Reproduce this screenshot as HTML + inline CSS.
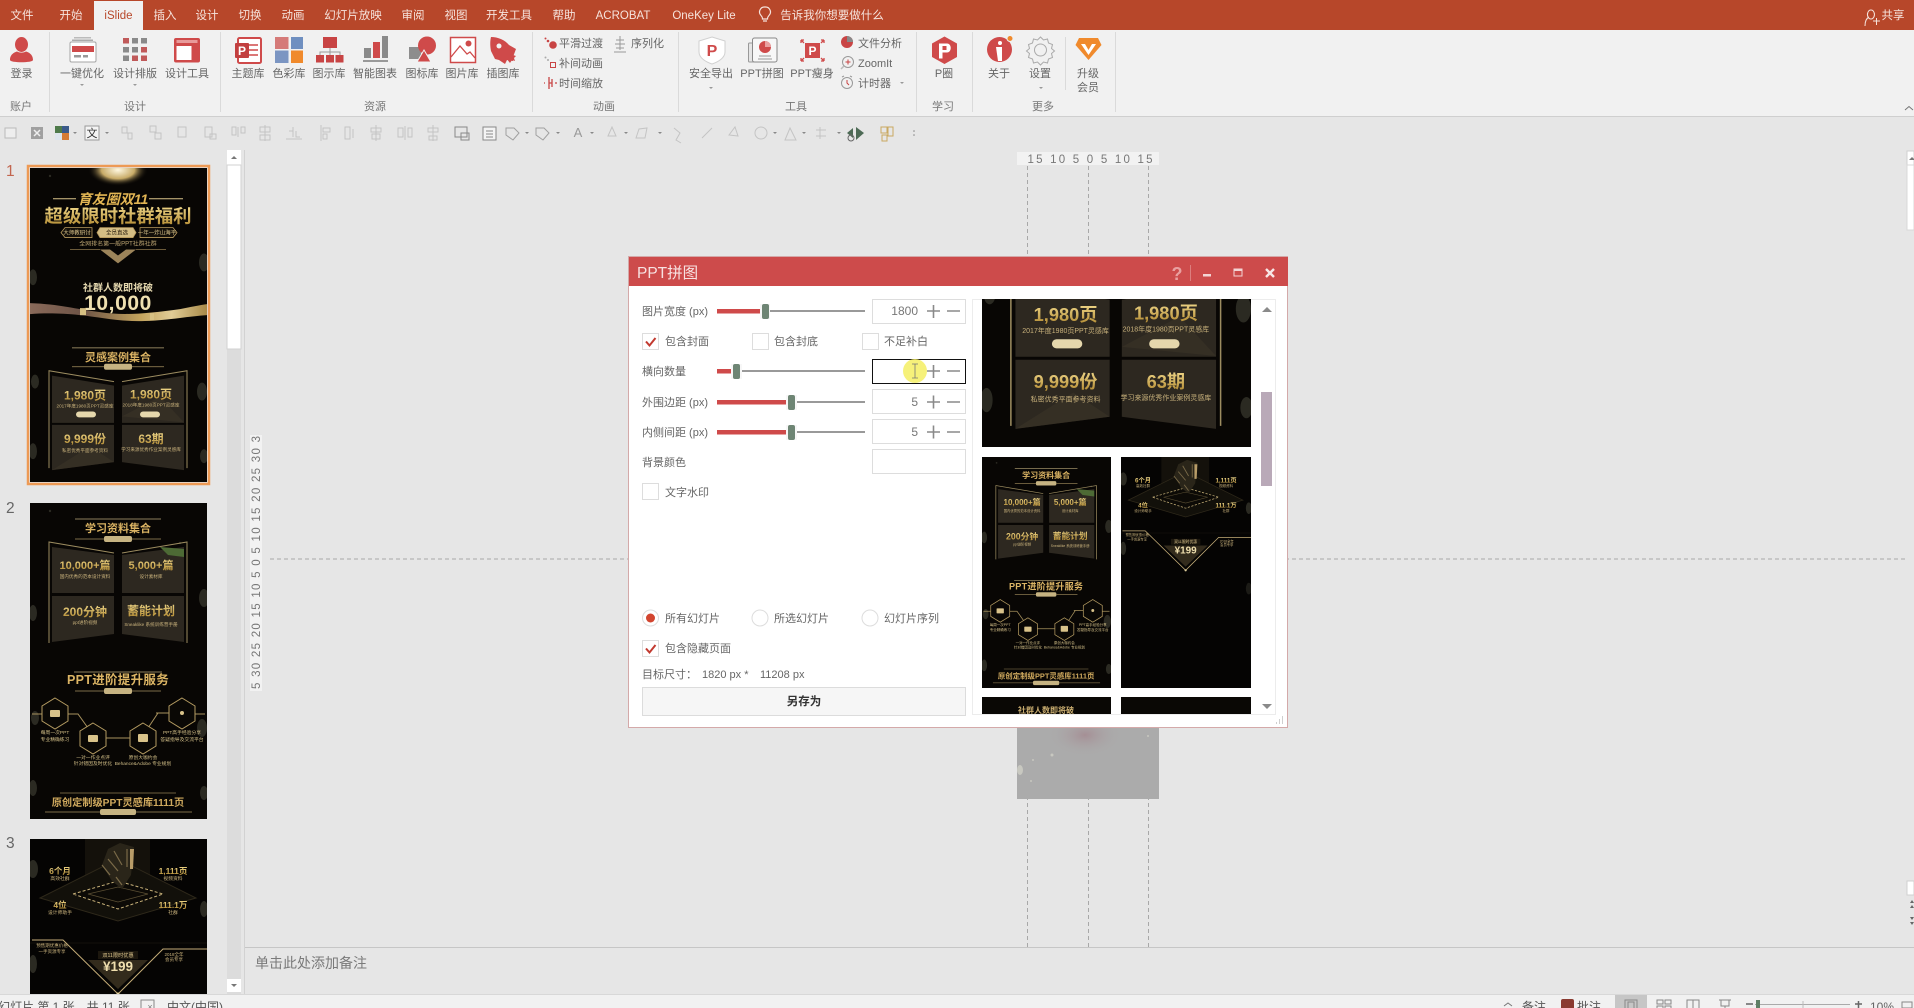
<!DOCTYPE html>
<html lang="zh-CN"><head><meta charset="utf-8"><title>PPT拼图</title>
<style>
html,body{margin:0;padding:0;width:1914px;height:1008px;overflow:hidden;background:#e6e6e6}
svg{display:block}
#root{filter:blur(.35px)}
text{font-family:"Liberation Sans","Noto Sans CJK SC",sans-serif}
.tab{font-size:11.5px;fill:#f6e3dc;text-anchor:middle}
.lb{font-size:11px;fill:#666;text-anchor:middle}
.ll{font-size:11px;fill:#666}
.g{font-size:11px;fill:#777;text-anchor:middle}
.d{font-size:11px;fill:#666}
.n{font-size:12px;fill:#777;text-anchor:end}
.c{text-anchor:middle;font-weight:bold}
.tb{fill:none;stroke:#c4c4c4;stroke-width:1}
.dd{fill:#999}
.gl{stroke:#a8a8a8;stroke-dasharray:4 3;stroke-width:1;fill:none}
.box{fill:#fff;stroke:#ddd}
.pm{stroke:#8a8a8a;stroke-width:1.6;fill:none}
</style></head><body>
<svg id="root" width="1914" height="1008" viewBox="0 0 1914 1008" xmlns="http://www.w3.org/2000/svg">
<defs>
<linearGradient id="gd" x1="0" y1="0" x2="0" y2="1"><stop offset="0" stop-color="#f0d88a"/><stop offset="1" stop-color="#b08830"/></linearGradient>
<linearGradient id="wv" x1="0" y1="0" x2="1" y2="0"><stop offset="0" stop-color="#8a6a5a"/><stop offset=".3" stop-color="#6d5346"/><stop offset=".62" stop-color="#c2a25c"/><stop offset=".8" stop-color="#e1cc96"/><stop offset="1" stop-color="#a88a48"/></linearGradient>
<radialGradient id="gl"><stop offset="0" stop-color="#fff8e0"/><stop offset=".55" stop-color="#c8ab68"/><stop offset="1" stop-color="#0a0805" stop-opacity="0"/></radialGradient>
<radialGradient id="rd"><stop offset="0" stop-color="#a58f95"/><stop offset="1" stop-color="#ababab" stop-opacity="0"/></radialGradient>

<symbol id="spots" viewBox="0 0 177 316">
<g fill="#2b2a22"><ellipse cx="3" cy="110" rx="4" ry="8"/><ellipse cx="174" cy="95" rx="5" ry="9"/><ellipse cx="5" cy="215" rx="4" ry="7"/><ellipse cx="172" cy="225" rx="5" ry="9"/><ellipse cx="3" cy="285" rx="4" ry="8"/><ellipse cx="174" cy="290" rx="4" ry="7"/><circle cx="20" cy="8" r="1.2"/><circle cx="150" cy="40" r="1.2"/></g>
</symbol>

<symbol id="s1" viewBox="0 0 177 316">
<rect width="177" height="316" fill="#080604"/>
<use href="#spots" width="177" height="316"/>
<ellipse cx="88" cy="2" rx="30" ry="16" fill="url(#gl)"/>
<path d="M23 31H46M119 31H153" stroke="#d8c28a" stroke-width="1"/>
<text x="83" y="36" class="c" font-size="14" font-style="italic" fill="#e3b654">育友圈双11</text>
<text x="88" y="55" class="c" font-size="18.4" fill="url(#gd)">超级限时社群福利</text>
<g fill="#14100a" stroke="#b89a5e" stroke-width=".8"><path d="M31 65l4-5H62V70H35z"/><path d="M70 60H103l3 5-3 5H70l-3-5z" fill="#d4bd84"/><path d="M110 60H143l4 5-4 5H110z"/></g>
<g text-anchor="middle" font-size="5.5" fill="#d8c28a"><text x="47" y="67">大师教研讨</text><text x="87" y="67" fill="#2b2010">全员直选</text><text x="127" y="67">一年一炸山海平</text></g>
<text x="88" y="78" text-anchor="middle" font-size="6" fill="#bfa774">全网排名第一般PPT社群社群</text>
<path d="M40 82H70M106 82H136" stroke="#6b5a3a"/>
<path d="M70 82L88 96L106 82L96 82L88 88L80 82Z" fill="#9c845a"/>
<text x="88" y="124" text-anchor="middle" font-size="10" fill="#e4d7ae" font-weight="bold">社群人数即将破</text>
<text x="88" y="143" class="c" font-size="21" letter-spacing=".6" fill="#efe0b0">10,000</text>
<path d="M0 136C30 137 45 142 70 145C95 149 120 146 150 142C160 140 170 138 177 137V148C160 149 140 153 115 154C90 155 70 150 50 148C30 146 15 146 0 147Z" fill="url(#wv)"/>
<path d="M50 141H56V148H50zM120 146H124V153H120z" fill="#d7c083"/>
<path d="M42 181H134" stroke="#b7a678" stroke-width=".8"/>
<text x="88" y="194" class="c" font-size="11" fill="#d9b263">灵感案例集合</text>
<path d="M42 200H74M102 200H134" stroke="#a38e5e" stroke-width=".8"/><rect x="74" y="197" width="28" height="6" rx="2" fill="#c6b382"/>
<path d="M19 302V204L84 215M157 302V204L92 215" fill="none" stroke="#9c8c60"/>
<path d="M22 209L84 219V256.500H22Z" fill="#2d2820"/><path d="M154 209L92 219V256.500H154Z" fill="#2d2820"/>
<path d="M22 258.500H84V296L22 304Z" fill="#2d2820"/><path d="M154 258.500H92V296L154 304Z" fill="#2d2820"/>
<path d="M22 304L60 280L84 296ZM92 250L130 230L154 256Z" fill="#3a3428" opacity=".6"/>
<g text-anchor="middle" font-weight="bold" fill="url(#gd)"><text x="55" y="233" font-size="12">1,980页</text><text x="121" y="232" font-size="12">1,980页</text><text x="55" y="277" font-size="12">9,999份</text><text x="121" y="277" font-size="12">63期</text></g>
<g text-anchor="middle" font-size="4.6" fill="#c9b27c"><text x="55" y="241">2017年度1980页PPT灵感库</text><text x="121" y="240">2018年度1980页PPT灵感库</text><text x="55" y="286">私密优秀平面参考资料</text><text x="121" y="285">学习来源优秀作业案例灵感库</text></g>
<rect x="46" y="245" width="20" height="6" rx="3" fill="#e5d7ac"/><rect x="110" y="245" width="20" height="6" rx="3" fill="#e5d7ac"/>
</symbol>

<symbol id="s2" viewBox="0 0 177 316">
<rect width="177" height="316" fill="#080604"/>
<use href="#spots" width="177" height="316"/>
<path d="M45 16H131" stroke="#b7a678" stroke-width=".8"/>
<text x="88" y="29" class="c" font-size="11" fill="#d9b263">学习资料集合</text>
<path d="M45 36H74M102 36H131" stroke="#a38e5e" stroke-width=".8"/><rect x="74" y="33" width="28" height="6" rx="2" fill="#c6b382"/>
<path d="M19 140V39L84 50M157 140V39L92 50" fill="none" stroke="#9c8c60"/>
<path d="M22 44L84 52V90H22Z" fill="#2d2820"/><path d="M154 44L92 52V90H154Z" fill="#2d2820"/><path d="M130 44L154 46V54L138 52Z" fill="#4d6a35"/>
<path d="M22 93H84V131L22 139Z" fill="#2d2820"/><path d="M154 93H92V131L154 139Z" fill="#2d2820"/>
<g text-anchor="middle" font-weight="bold" fill="url(#gd)"><text x="55" y="66" font-size="11">10,000+篇</text><text x="121" y="66" font-size="11">5,000+篇</text><text x="55" y="113" font-size="12">200分钟</text><text x="121" y="112" font-size="12">蓄能计划</text></g>
<g text-anchor="middle" font-size="4.6" fill="#c9b27c"><text x="55" y="75">国内优秀的范本设计资料</text><text x="121" y="75">设计素材库</text><text x="55" y="121">ppt进阶视频</text><text x="121" y="123">Sneaklike 系统训练营手册</text></g>
<path d="M44 169H132" stroke="#b7a678" stroke-width=".8"/>
<text x="88" y="181" class="c" font-size="12.5" letter-spacing=".3" fill="#dcb565">PPT进阶提升服务</text>
<path d="M45 188H74M102 188H131" stroke="#a38e5e" stroke-width=".8"/><rect x="74" y="185" width="28" height="6" rx="2" fill="#c6b382"/>
<path d="M2 211H13M37 211H48L58 225M126 210H136M165 211H175M118 225L128 210H139M74 235H102" fill="none" stroke="#a8925e"/>
<g fill="#0a0805" stroke="#b59c62" stroke-width="1"><path d="M25 195L38 203V218L25 226L12 218V203Z"/><path d="M63 220L76 228V243L63 251L50 243V228Z"/><path d="M113 220L126 228V243L113 251L100 243V228Z"/><path d="M152 195L165 203V218L152 226L139 218V203Z"/></g>
<g fill="#d9c38a"><rect x="20" y="207" width="10" height="7" rx="1"/><rect x="58" y="232" width="10" height="7" rx="1"/><rect x="108" y="231" width="10" height="8" rx="1"/><circle cx="152" cy="210" r="2"/></g>
<g text-anchor="middle" font-size="4.8" fill="#d3bf88"><text x="25" y="231">每周一次PPT</text><text x="25" y="238">专业精确练习</text><text x="63" y="256">一对一作业点评</text><text x="63" y="262">针对错因及时优化</text><text x="113" y="256">原创大咖约会</text><text x="113" y="262">Behance&amp;Adobe 专业规划</text><text x="152" y="231">PPT高手经验分享</text><text x="152" y="238">答疑指导及交流平台</text></g>
<path d="M30 290H146" stroke="#8f7c52" stroke-width=".7"/>
<text x="88" y="303" class="c" font-size="10.2" fill="#cfa95e">原创定制级PPT灵感库1111页</text>
<path d="M15 309H70M106 309H162" stroke="#a38e5e" stroke-width=".8"/><rect x="70" y="306" width="36" height="6" rx="2" fill="#c6b382"/>
</symbol>

<symbol id="s3" viewBox="0 0 177 316">
<rect width="177" height="316" fill="#050403"/>
<ellipse cx="3" cy="30" rx="5" ry="9" fill="#2b2a22"/><ellipse cx="174" cy="70" rx="4" ry="8" fill="#2b2a22"/><ellipse cx="3" cy="125" rx="4" ry="9" fill="#2b2a22"/><ellipse cx="174" cy="180" rx="4" ry="8" fill="#1c1b16"/>
<rect x="55" y="0" width="65" height="50" fill="#14110b"/>
<path d="M10 59L88 20L166 59L88 82Z" fill="#12100a" stroke="#2e281a"/>
<path d="M43 55L88 42L133 55L88 70Z" fill="#0c0a06" stroke="#c8b27a" stroke-dasharray="3 2" stroke-width="1"/>
<path d="M58 55L88 48L118 55L88 63Z" fill="none" stroke="#5c5034" stroke-width=".7"/>
<path d="M78 10L90 4L104 8L101 36L92 50L82 42L72 26Z" fill="#2a2519"/>
<path d="M78 20L88 32M84 12L92 26M97 10V28M72 26L80 36M86 38L92 46" stroke="#7a6a48" stroke-width="1.200" fill="none"/><path d="M100 10L104 10L103 30L100 30Z" fill="#b89c68"/>
<path d="M0 104H177" stroke="#14110b"/>
<path d="M2 101L33 101L88 155L133 110L177 110" fill="none" stroke="#c5ad78" stroke-width="1"/>
<path d="M58 121H118L88 150Z" fill="#332b1c"/>
<circle cx="88" cy="155" r="1.5" fill="#e2d19e"/>
<g text-anchor="middle" font-weight="bold" fill="url(#gd)" font-size="8.5"><text x="30" y="35">6个月</text><text x="143" y="35">1,111页</text><text x="30" y="69">4位</text><text x="143" y="69">111.1万</text></g>
<g text-anchor="middle" font-size="4.8" fill="#c9b27c"><text x="30" y="41">高效社群</text><text x="143" y="41">视频资料</text><text x="30" y="75">设计师助手</text><text x="143" y="75">社群</text></g>
<text x="22" y="108" text-anchor="middle" font-size="4.5" fill="#c9b27c">预售期优惠价格</text><text x="22" y="114" text-anchor="middle" font-size="4.5" fill="#c9b27c">一手资源专享</text><text x="144" y="117" text-anchor="middle" font-size="4.5" fill="#c9b27c">2018全年</text><text x="144" y="122" text-anchor="middle" font-size="4.5" fill="#c9b27c">会员专享</text>
<rect x="68" y="112" width="40" height="8" fill="#1c170e"/>
<text x="88" y="118" text-anchor="middle" font-size="5.2" fill="#e0c88e">双11限时优惠</text>
<text x="88" y="132" class="c" font-size="13.5" fill="#f0dfae">¥199</text>
</symbol>
</defs>

<!-- title / tabs -->
<rect width="1914" height="30" fill="#b7472a"/>
<rect x="94" y="1" width="49" height="29" fill="#f1f1f1"/>
<g class="tabs">
<text x="22" y="19" class="tab">文件</text><text x="71" y="19" class="tab">开始</text>
<text x="118.500" y="19" class="tab" style="fill:#b7472a">iSlide</text>
<text x="165" y="19" class="tab">插入</text><text x="207" y="19" class="tab">设计</text><text x="250" y="19" class="tab">切换</text><text x="293" y="19" class="tab">动画</text><text x="353" y="19" class="tab">幻灯片放映</text><text x="413" y="19" class="tab">审阅</text><text x="456" y="19" class="tab">视图</text><text x="509" y="19" class="tab">开发工具</text><text x="564" y="19" class="tab">帮助</text><text x="623" y="19" class="tab">ACROBAT</text><text x="704" y="19" class="tab">OneKey Lite</text><text x="832" y="19" class="tab">告诉我你想要做什么</text><text x="1893" y="19" class="tab">共享</text>
</g>
<path d="M765 7a5 5 0 0 1 4 8.500c-1 1-1.500 2-1.500 3.500h-5c0-1.500-.5-2.500-1.500-3.500A5 5 0 0 1 765 7zM763 21h4" fill="none" stroke="#f6e3dc" stroke-width="1.200"/>
<path d="M1871 10a3.500 4.500 0 1 1-.1 0zM1865 26c0-6 2-8 4-9M1873 21h7M1876.500 18v7" fill="none" stroke="#f6e3dc"/>

<!-- ribbon -->
<rect y="30" width="1914" height="86" fill="#f1f1f1"/>
<rect y="116" width="1914" height="1" fill="#cfcfcf"/>
<g stroke="#dadada"><path d="M49.500 32V112M220.500 32V112M532.500 32V112M678.500 32V112M916.500 32V112M972.500 32V112M1115.500 32V112M1065.500 37V90"/></g>
<path d="M1905 110l4-3.500 4 3.500" fill="none" stroke="#777"/>

<!-- ribbon icons -->
<g>
<ellipse cx="21.500" cy="44.500" rx="6.500" ry="7.500" fill="#cf4a4a"/><path d="M10 60c0-6 5-8 7-8.500 3 1.500 6 1.500 9 0 2 .5 7 2.500 7 8.500 0 3-23 3-23 0z" fill="#cf4a4a"/>
<rect x="74" y="37" width="17" height="1.500" fill="#bbb"/><rect x="72" y="39.500" width="21" height="1.500" fill="#aaa"/><rect x="70" y="42" width="26" height="20" rx="1.500" fill="#fff" stroke="#a5a5a5"/><rect x="72" y="46" width="22" height="6" fill="#cf4a4a"/><rect x="74" y="55" width="7" height="2.500" fill="#999"/><rect x="83" y="55" width="5" height="2.500" fill="#999"/>
<g fill="#8a8a8a"><rect x="123" y="38" width="6" height="5.500" fill="#c05a5a"/><rect x="132" y="38" width="6" height="5.500"/><rect x="141" y="38" width="6" height="5.500"/><rect x="123" y="47" width="6" height="5.500"/><rect x="132" y="47" width="6" height="5.500"/><rect x="141" y="47" width="6" height="5.500" fill="#c05a5a"/><rect x="123" y="55.500" width="6" height="5.500"/><rect x="132" y="55.500" width="6" height="5.500" fill="#c05a5a"/><rect x="141" y="55.500" width="6" height="5.500" fill="#c05a5a"/></g>
<rect x="174" y="38" width="26" height="24.500" rx="2" fill="#cf4a4a"/><rect x="176.500" y="46" width="15" height="14" fill="#fff"/><rect x="176.500" y="40" width="21" height="3" fill="#e89a9a"/>
<rect x="238" y="38" width="23" height="25" rx="1.500" fill="#fff" stroke="#cf4a4a" stroke-width="2"/><path d="M249 45h9M249 50h9M249 55h9" stroke="#cf4a4a" stroke-width="1.500"/><rect x="235" y="43" width="14" height="15" rx="1" fill="#c23f3f"/><text x="242" y="55" text-anchor="middle" font-size="12" font-weight="bold" fill="#fff">P</text>
<rect x="275" y="37" width="13.500" height="12" fill="#d57a78"/><rect x="291" y="37" width="12" height="12" fill="#6f8fc0"/><rect x="275" y="50.500" width="13.500" height="12.500" fill="#7b95c2"/><rect x="291" y="50.500" width="12" height="12.500" fill="#f08a2c"/>
<rect x="323" y="37" width="14" height="11" fill="#c84444"/><path d="M330 48v4M320 55v-3h20v3M330 52v3" fill="none" stroke="#999"/><rect x="316" y="55" width="8" height="7.500" fill="#c84444"/><rect x="326" y="55" width="8" height="7.500" fill="#c84444"/><rect x="335.500" y="55" width="8" height="7.500" fill="#c84444"/>
<rect x="364" y="48" width="7" height="10" fill="#8a8a8a"/><rect x="373" y="42" width="7" height="16" fill="#cf4a4a"/><rect x="382" y="36" width="6" height="22" fill="#8a8a8a"/><rect x="363" y="60" width="25" height="2" fill="#999"/>
<rect x="409" y="47" width="12" height="12" fill="#8d8d8d"/><circle cx="427" cy="45.500" r="9" fill="#cf4a4a"/><path d="M424 50l7 12h-14z" fill="#cf4a4a" stroke="#f1f1f1"/>
<rect x="450.500" y="37.500" width="25" height="25" fill="#fff" stroke="#cf4a4a" stroke-width="1.500"/><circle cx="468.500" cy="43.500" r="3" fill="#cf4a4a"/><path d="M451 57l9-11 7 8 3-2 5 6" fill="none" stroke="#cf4a4a" stroke-width="1.300"/>
<path d="M491 37c7 0 14 3 18 8l7 4-3 8 0 4-6-1-2 4-6-4-4-1-4-8c-1-5-1-10 0-14z" fill="#cf4a4a"/><path d="M506 58l4 5 2-3 3 1-1-3 2-2-3-1z" fill="#cf4a4a"/><circle cx="499" cy="46" r="2.500" fill="#f1f1f1"/>
<circle cx="545.500" cy="38.500" r="1" fill="#c84444"/><circle cx="548" cy="41" r="1.300" fill="#c84444"/><circle cx="553" cy="45" r="3.800" fill="#c84444"/>
<circle cx="545.500" cy="57.500" r="1" fill="#aaa"/><circle cx="548" cy="60" r="1" fill="#aaa"/><rect x="550.500" y="62.500" width="5" height="5" fill="none" stroke="#c84444"/>
<path d="M549 77v12M552 79v8M545 83h-1M555 83h2M549 83h3" stroke="#c84444" stroke-width="1.300" fill="none"/>
<path d="M620 36v14M616 40h8M615 44h10M616 48h8M614 52h12" stroke="#999" fill="none"/>
<path d="M712 37l13 4v11c0 6-7 10-13 12-6-2-13-6-13-12V41z" fill="#fff" stroke="#d0d0d0"/><text x="712" y="56" text-anchor="middle" font-size="16" font-weight="bold" fill="#cf4a4a">P</text>
<rect x="748.500" y="43" width="6" height="19" rx="1" fill="#e5e5e5" stroke="#999"/><rect x="752.500" y="38" width="24.500" height="24" rx="2" fill="#f7f7f7" stroke="#888"/><circle cx="765" cy="47" r="6" fill="#cf4a4a"/><path d="M765 47v-6a6 6 0 0 1 6 6z" fill="#e9a0a0"/><path d="M759 56h12M758 59h14" stroke="#999"/>
<rect x="805" y="43" width="15" height="15" fill="#cf4a4a"/><text x="812.500" y="55" text-anchor="middle" font-size="12" font-weight="bold" fill="#fff">P</text><path d="M801 40l3 3M801 40v3M801 40h3M824 40l-3 3M824 40v3M824 40h-3M801 61l3-3M801 61v-3M801 61h3M824 61l-3-3M824 61v-3M824 61h-3" stroke="#cf4a4a" stroke-width="1.300" fill="none"/>
<circle cx="847" cy="42" r="6" fill="#c84444"/><path d="M847 42v-6a6 6 0 0 1 6 6z" fill="#888"/>
<circle cx="848" cy="62" r="5.500" fill="none" stroke="#999"/><path d="M848 59.500v5M845.500 62h5" stroke="#c84444"/><path d="M844 66l-3 3" stroke="#bbb" stroke-width="1.500"/>
<circle cx="847" cy="83" r="5.500" fill="none" stroke="#999"/><path d="M847 80v3l2 2" stroke="#c84444" fill="none"/><path d="M842 77l2-1M852 77l-2-1" stroke="#999"/>
<path d="M944.500 36.500l12.500 7v13.500l-12.500 7-12.500-7V43.500z" fill="#cf4a4a"/><path d="M939 43.500h8c5 0 5 9 0 9h-4.500v6H939z" fill="#fff"/><rect x="942.500" y="46" width="4" height="4" fill="#cf4a4a"/>
<circle cx="999.500" cy="49.500" r="12.500" fill="#cf4a4a"/><circle cx="1000" cy="43" r="2" fill="#fff"/><path d="M996 47h6v14h-4z" fill="#fff"/><circle cx="1010" cy="38.500" r="3" fill="#f08a2c" stroke="#f1f1f1"/>
<path d="M1040.500 37l3 3 4-1 1 4 4 1.500-1 4 3 2.500-3 2.500 1 4-4 1.500-1 4-4-1-3 3-3-3-4 1-1-4-4-1.500 1-4-3-2.500 3-2.500-1-4 4-1.500 1-4 4 1z" fill="none" stroke="#aaa"/><circle cx="1040.500" cy="50" r="6" fill="none" stroke="#aaa"/>
<path d="M1079 38h19l3.500 7-13 15-13-15z" fill="#f08a2c"/><path d="M1081 44h4l3.500 6 3.500-6h4l-7.500 11z" fill="#fff"/>
<path d="M82 86l-2-2h4zM135 86l-2-2h4zM711 89l-2-2h4zM1041 89l-2-2h4zM902 84l-2-2h4z" class="dd"/>
</g>

<!-- ribbon labels -->
<g>
<text x="21.500" y="77" class="lb">登录</text><text x="82" y="77" class="lb">一键优化</text><text x="135" y="77" class="lb">设计排版</text><text x="187" y="77" class="lb">设计工具</text><text x="248" y="77" class="lb">主题库</text><text x="289" y="77" class="lb">色彩库</text><text x="329" y="77" class="lb">图示库</text><text x="375" y="77" class="lb">智能图表</text><text x="422" y="77" class="lb">图标库</text><text x="462" y="77" class="lb">图片库</text><text x="503" y="77" class="lb">插图库</text>
<text x="711" y="77" class="lb">安全导出</text><text x="762" y="77" class="lb">PPT拼图</text><text x="812" y="77" class="lb">PPT瘦身</text><text x="944" y="77" class="lb">P圈</text><text x="999" y="77" class="lb">关于</text><text x="1040" y="77" class="lb">设置</text><text x="1088" y="77" class="lb">升级</text><text x="1088" y="91" class="lb">会员</text>
<text x="559" y="47" class="ll">平滑过渡</text><text x="559" y="67" class="ll">补间动画</text><text x="559" y="87" class="ll">时间缩放</text><text x="631" y="47" class="ll">序列化</text><text x="858" y="47" class="ll">文件分析</text><text x="858" y="67" class="ll">ZoomIt</text><text x="858" y="87" class="ll">计时器</text>
<text x="21" y="110" class="g">账户</text><text x="135" y="110" class="g">设计</text><text x="375" y="110" class="g">资源</text><text x="604" y="110" class="g">动画</text><text x="796" y="110" class="g">工具</text><text x="943" y="110" class="g">学习</text><text x="1043" y="110" class="g">更多</text>
</g>

<!-- quick toolbar -->
<g>
<rect x="5" y="128" width="11" height="10" fill="#eee" stroke="#bbb"/>
<rect x="31" y="127" width="12" height="12" fill="#a0a0a0"/><path d="M34 130l6 6M40 130l-6 6" stroke="#eee" stroke-width="1.500"/>
<rect x="55" y="126" width="7" height="7" fill="#4e7a4a"/><rect x="62" y="126" width="7" height="7" fill="#3a5a8a"/><rect x="55" y="133" width="7" height="7" fill="#dce4ec"/><rect x="62" y="133" width="7" height="7" fill="#d57b33"/>
<rect x="85" y="126" width="14" height="14" fill="#f4f4f4" stroke="#999"/><text x="92" y="137" text-anchor="middle" font-size="11" fill="#333">文</text>
<g class="tb">
<path d="M122 127h5v6h-5zM128 133h4v6h-4zM150 126h6v6h-6zM155 133h6v6h-6zM178 127h8v10h-8zM205 127h7v10h-7zM210 134h6v5h-6z"/>
<path d="M232 127v8h4v-8zM238 127v10M241 127v6h4v-6zM265 125v16M260 127h10v5h-10zM260 135h10v5h-10zM293 127v8M289 131h4v6M296 131v6h4M286 139h16M321 125v16M323 128h7v4h-7zM323 134h4v5h-4zM345 127h5v12h-5zM353 129v9M376 125v16M371 128h10v4h-10zM372 134h8v5h-8zM398 128h5v9h-5zM405 126v14M408 128h4v9h-4zM433 125v16M428 128h10v4h-10zM429 136h8v4h-8z"/>
<path d="M455 127h12v10h-12zM461 133h8v7h-8z" stroke="#888"/><rect x="483" y="127" width="13" height="13" fill="#f4f4f4" stroke="#888"/><path d="M486 131h7M486 134h7M486 137h7" stroke="#888"/>
<path d="M506 128h8l5 5-6 7-7-5zM536 128h8l5 5-6 7-7-5z" stroke="#a0a0a0"/>
<path d="M608 136l4-9 4 9zM636 138l3-9 8-1-2 10zM674 128l6 5-4 7 5 3M702 138l10-10M729 135l6-8 3 9zM755 133a6 6 0 1 0 12 0 6 6 0 1 0-12 0M785 140l5-12 6 12zM820 127v12M816 130h10M816 136h10"/>
</g>
<text x="578" y="137" text-anchor="middle" font-size="13" fill="#999">A</text>
<path d="M853 128l-6 5 6 5zM856 127l8 6-8 7z" fill="#4d6a55"/><circle cx="851" cy="138" r="3" fill="none" stroke="#666"/>
<path d="M881 127h6v6h-6zM888 127h5v9h-5zM882 135h5v6h-5z" fill="none" stroke="#c9a860"/>
<path d="M75 134l-2-2h4zM107 134l-2-2h4zM527 134l-2-2h4zM558 134l-2-2h4zM592 134l-2-2h4zM626 134l-2-2h4zM660 134l-2-2h4zM775 134l-2-2h4zM804 134l-2-2h4zM839 134l-2-2h4z" fill="#888"/>
<circle cx="914" cy="131" r=".8" fill="#888"/><circle cx="914" cy="135" r=".8" fill="#888"/>
</g>

<!-- main area -->
<rect x="244" y="150" width="1" height="845" fill="#d2d2d2"/>
<rect x="245" y="947" width="1669" height="1" fill="#c6c6c6"/>
<text x="255" y="968" font-size="14" fill="#7a7a7a">单击此处添加备注</text>

<!-- rulers + guides -->
<rect x="1017" y="152" width="142" height="13" fill="#f2f2f2"/>
<text x="1090" y="163" text-anchor="middle" font-size="11.500" fill="#777" textLength="125" lengthAdjust="spacing">15 10 5 0 5 10 15</text>
<rect x="250" y="435" width="12" height="256" fill="#f2f2f2"/>
<text transform="translate(260,689) rotate(-90)" font-size="11.500" fill="#777" textLength="253" lengthAdjust="spacing">5 30 25 20 15 10 5 0 5 10 15 20 25 30 3</text>
<path d="M1027.500 166V947M1088.500 166V947M1148.500 166V947M270 559H1907" class="gl"/>
<rect x="1017" y="700" width="142" height="99" fill="#ababab"/>
<ellipse cx="1085" cy="735" rx="38" ry="22" fill="url(#rd)"/>
<g fill="#c8c8c0"><circle cx="1052" cy="755" r="1.500"/><circle cx="1033" cy="760" r="1"/><circle cx="1148" cy="736" r="1"/><ellipse cx="1020" cy="770" rx="3" ry="5"/><circle cx="1031" cy="781" r="1"/></g>

<!-- right scrollbar -->
<rect x="1907" y="151" width="7" height="14" fill="#fff" stroke="#d0d0d0"/><path d="M1909 160l3-3 3 3z" fill="#777"/><rect x="1907" y="165" width="7" height="65" fill="#fff" stroke="#d8d8d8"/>
<rect x="1907" y="881" width="7" height="14" fill="#fff" stroke="#d0d0d0"/><path d="M1910 903l2-3 2 3zM1910 908l2-3 2 3zM1910 917l2 3 2-3zM1910 922l2 3 2-3z" fill="#666"/>

<!-- left slides panel -->
<text x="6" y="176" font-size="15.500" fill="#c2664f">1</text>
<text x="6" y="513" font-size="15.500" fill="#666">2</text>
<text x="6" y="848" font-size="15.500" fill="#666">3</text>
<rect x="28" y="166" width="181" height="318" fill="none" stroke="#ed9a55" stroke-width="2.500"/>
<svg x="30" y="168" width="177" height="314" viewBox="0 0 177 316" preserveAspectRatio="none"><use href="#s1" width="177" height="316"/></svg>
<svg x="30" y="503" width="177" height="316" viewBox="0 0 177 316"><use href="#s2" width="177" height="316"/></svg>
<svg x="30" y="839" width="177" height="155" viewBox="0 0 177 155"><use href="#s3" width="177" height="316"/></svg>
<rect x="227" y="150" width="14" height="845" fill="#dcdcdc"/>
<rect x="227" y="150" width="14" height="15" fill="#fff"/><path d="M231 159l3-3 3 3z" fill="#777"/>
<rect x="227" y="165" width="14" height="184" fill="#fff" stroke="#d2d2d2"/>
<rect x="227" y="979" width="14" height="13" fill="#fff"/><path d="M231 984l3 3 3-3z" fill="#777"/>

<!-- status bar -->
<rect y="995" width="1914" height="13" fill="#f1f1f1"/><rect y="994" width="1914" height="1" fill="#d8d8d8"/>
<text x="-2" y="1011" font-size="12" fill="#555">幻灯片 第 1 张，共 11 张</text>
<rect x="141" y="1000" width="13" height="12" fill="none" stroke="#888"/><text x="150" y="1010" text-anchor="middle" font-size="9" fill="#777">×</text>
<text x="167" y="1011" font-size="12" fill="#555">中文(中国)</text>
<path d="M1504 1006l4-3 4 3M1504 1009h8" fill="none" stroke="#777"/>
<text x="1522" y="1011" font-size="12" fill="#555">备注</text>
<rect x="1561" y="999" width="13" height="12" rx="2" fill="#8a3a30"/>
<text x="1577" y="1011" font-size="12" fill="#555">批注</text>
<rect x="1615" y="995" width="32" height="13" fill="#c6c6c6"/>
<path d="M1625 1000h12v10h-12zM1628 1002h6v8h-6zM1657 1000h6v4h-6zM1665 1000h6v4h-6zM1657 1006h6v4h-6zM1665 1006h6v4h-6zM1687 1000h12v10h-12zM1693 1000v10M1719 1000h12M1721 1000v6h8v-6M1725 1006v4" fill="none" stroke="#888"/>
<path d="M1746 1004h7M1855 1004h7M1858.500 1001v7" stroke="#666" stroke-width="1.500"/>
<path d="M1755 1004.500H1850" stroke="#aaa"/><rect x="1802.500" y="1001" width="1" height="7" fill="#bbb"/>
<rect x="1756" y="1000" width="4" height="8" fill="#5f7f66"/>
<text x="1870" y="1011" font-size="12" fill="#666">10%</text>
<path d="M1902 1002h10v6h-10z" fill="none" stroke="#888"/>

<!-- dialog -->
<rect x="628.500" y="256.500" width="659" height="471" fill="#fff" stroke="#d4a9a9"/>
<rect x="629" y="257" width="659" height="29" fill="#cd4b4b"/>
<text x="637" y="278" font-size="15.500" fill="#f7e1e1">PPT拼图</text>
<text x="1177" y="280" text-anchor="middle" font-size="18" font-weight="bold" fill="#e9a0a0">?</text>
<path d="M1190.500 265V281" stroke="#dc7e7e"/>
<rect x="1203" y="274" width="8" height="2.500" fill="#f3d4d4"/>
<rect x="1234" y="269" width="8" height="7" fill="none" stroke="#f3d4d4"/><rect x="1234" y="269" width="8" height="2" fill="#f3d4d4"/>
<path d="M1266 269l8 8M1274 269l-8 8" stroke="#f7e6e6" stroke-width="2.400"/>

<!-- form -->
<g class="d">
<text x="642" y="315" class="d">图片宽度 (px)</text><text x="642" y="375" class="d">横向数量</text><text x="642" y="406" class="d">外围边距 (px)</text><text x="642" y="436" class="d">内侧间距 (px)</text><text x="642" y="466" class="d">背景颜色</text>
<text x="665" y="345" class="d">包含封面</text><text x="774" y="345" class="d">包含封底</text><text x="884" y="345" class="d">不足补白</text><text x="665" y="496" class="d">文字水印</text>
<text x="665" y="622" class="d">所有幻灯片</text><text x="774" y="622" class="d">所选幻灯片</text><text x="884" y="622" class="d">幻灯片序列</text>
<text x="665" y="652" class="d">包含隐藏页面</text>
<text x="642" y="678" class="d">目标尺寸：</text><text x="702" y="678" class="d">1820 px *</text><text x="760" y="678" class="d">11208 px</text>
</g>
<g fill="#999"><rect x="717" y="310" width="148" height="2"/><rect x="717" y="370" width="148" height="2"/><rect x="717" y="401" width="148" height="2"/><rect x="717" y="431" width="148" height="2"/></g>
<g fill="#cf4a4a"><rect x="717" y="309" width="43" height="4.500"/><rect x="717" y="369" width="15" height="4.500"/><rect x="717" y="400" width="70" height="4.500"/><rect x="717" y="430" width="70" height="4.500"/></g>
<g fill="#f7f7f7"><rect x="760" y="304" width="10" height="15"/><rect x="731" y="364" width="11" height="15"/><rect x="786" y="395" width="11" height="15"/><rect x="786" y="425" width="11" height="15"/></g>
<g fill="#6e8574"><rect x="762" y="304" width="7" height="15" rx="2"/><rect x="733" y="364" width="7" height="15" rx="2"/><rect x="788" y="395" width="7" height="15" rx="2"/><rect x="788" y="425" width="7" height="15" rx="2"/></g>
<g class="box"><rect x="872.500" y="299.500" width="93" height="24"/><rect x="872.500" y="389.500" width="93" height="24"/><rect x="872.500" y="419.500" width="93" height="24"/><rect x="872.500" y="449.500" width="93" height="24"/></g>
<rect x="872.500" y="359.500" width="93" height="24" fill="#fff" stroke="#111"/>
<circle cx="915" cy="371" r="12" fill="#f5ef63" opacity=".85"/>
<path d="M912 364h3v14h-3M915 364h3M915 378h3" fill="none" stroke="#777" stroke-width=".8"/>
<text x="918" y="315" class="n">1800</text><text x="918" y="406" class="n">5</text><text x="918" y="436" class="n">5</text>
<g class="pm"><path d="M927 311h13M933.500 305v13M947 311h13M927 371h13M933.500 365v13M947 371h13M927 402h13M933.500 395.500v13M947 402h13M927 432h13M933.500 425.500v13M947 432h13"/></g>
<g class="box"><rect x="642.500" y="333.500" width="16" height="16"/><rect x="752.500" y="333.500" width="16" height="16"/><rect x="862.500" y="333.500" width="16" height="16"/><rect x="642.500" y="483.500" width="16" height="16"/><rect x="642.500" y="640.500" width="16" height="16"/></g>
<path d="M646 341.500l3.500 4 6-7.500M646 648.500l3.500 4 6-7.500" fill="none" stroke="#c2392f" stroke-width="2"/>
<g fill="#fff" stroke="#ddd"><circle cx="650.500" cy="618" r="8"/><circle cx="760" cy="618" r="8"/><circle cx="870" cy="618" r="8"/></g>
<circle cx="650.500" cy="618" r="4.500" fill="#d2452f"/>
<rect x="642.500" y="687.500" width="323" height="28" fill="#f6f6f6" stroke="#dcdcdc"/>
<text x="804" y="705" text-anchor="middle" font-size="11.500" font-weight="bold" fill="#333">另存为</text>

<!-- preview panel -->
<rect x="972.500" y="299.500" width="303" height="415" fill="#fff" stroke="#ececec"/>
<svg x="982" y="299" width="269" height="148" viewBox="0 218.500 177 97.400" preserveAspectRatio="none"><use href="#s1" width="177" height="316"/></svg>
<svg x="982" y="457" width="129" height="231" viewBox="0 0 177 316" preserveAspectRatio="none"><use href="#s2" width="177" height="316"/></svg>
<svg x="1121" y="457" width="130" height="231" viewBox="0 0 177 316" preserveAspectRatio="none"><use href="#s3" width="177" height="316"/></svg>
<rect x="982" y="697" width="129" height="17" fill="#0a0805"/><rect x="1121" y="697" width="130" height="17" fill="#0a0805"/>
<text x="1046" y="713" text-anchor="middle" font-size="8" font-weight="bold" fill="#c9ad70">社群人数即将破</text>
<path d="M1262 312l5-5 5 5z" fill="#8a8a8a"/><rect x="1261" y="392" width="11" height="94" fill="#b9a9b8"/><path d="M1262 704l5 5 5-5z" fill="#8a8a8a"/>
<g fill="#cfcfcf"><rect x="1282" y="716" width="1" height="8"/><rect x="1279" y="719" width="1" height="5"/><rect x="1276" y="722" width="1" height="2"/></g>
</svg>
</body></html>
